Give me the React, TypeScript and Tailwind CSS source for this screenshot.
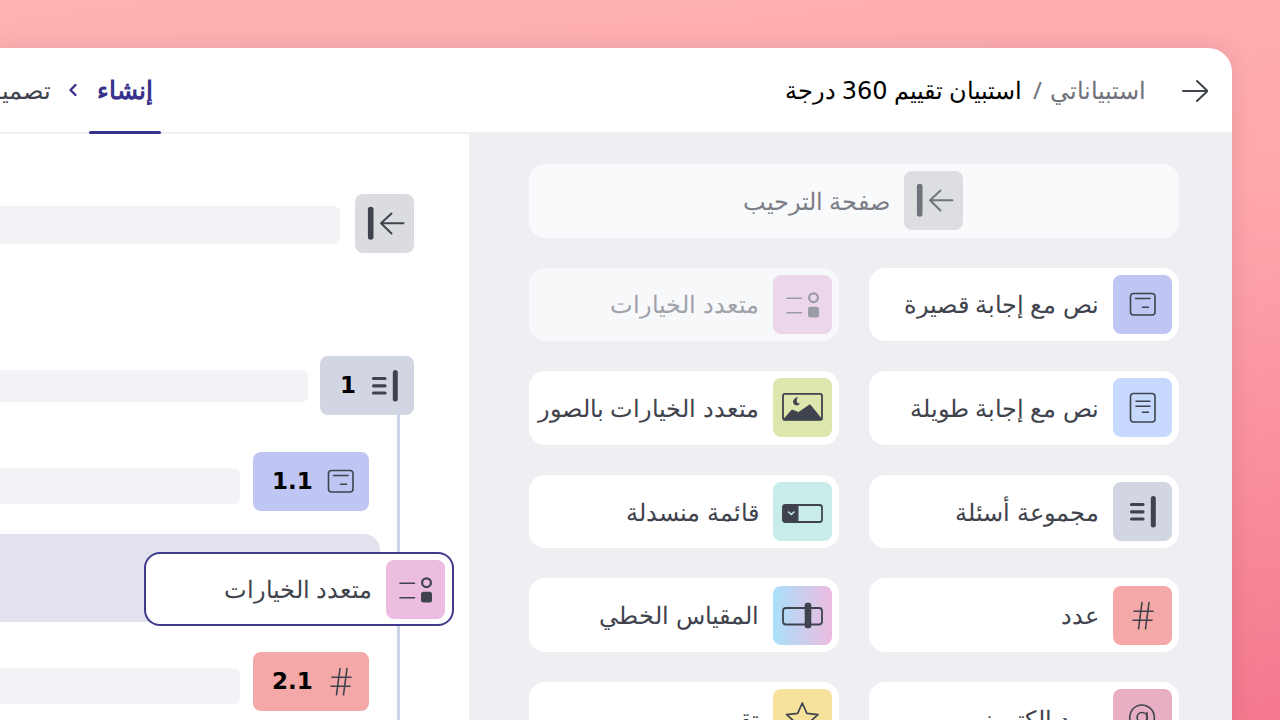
import React from "react";

const Svg = ({ children }: { children: React.ReactNode }) => (
  <svg viewBox="0 0 59 59" className="w-[59px] h-[59px] shrink-0" fill="none" stroke="currentColor" strokeLinecap="round" strokeLinejoin="round">
    {children}
  </svg>
);

const Short = () => (
  <Svg>
    <rect x="17.5" y="18.5" width="24.5" height="21.5" rx="3" strokeWidth="1.6" />
    <path d="M22.5 23.5H37M29.5 32.2H35.5" strokeWidth="1.6" />
  </Svg>
);
const Long = () => (
  <Svg>
    <rect x="17.5" y="15.5" width="24.5" height="28.5" rx="3" strokeWidth="1.6" />
    <path d="M23 23.3H37M23 28.3H37M29.5 34.3H35.5" strokeWidth="1.6" />
  </Svg>
);
const Group = () => (
  <Svg>
    <path d="M40.3 16.5V43" strokeWidth="5" />
    <path d="M18.5 22.5H30M18.5 29.8H30M18.5 37H30" strokeWidth="3.2" />
  </Svg>
);
const Hash = () => (
  <Svg>
    <path d="M21 25.3H40M20 34.3H39M29 16.5L25.5 42.8M36 16.5L32.5 42.8" strokeWidth="1.6" />
  </Svg>
);
const Multi = () => (
  <Svg>
    <path d="M14 23.3H28.5M14 37.7H28.5" strokeWidth="1.6" />
    <circle cx="40.5" cy="22.7" r="4.4" strokeWidth="2.2" />
    <rect x="35" y="31.7" width="11" height="10.8" rx="2.5" fill="currentColor" stroke="none" />
  </Svg>
);
const ImageIcon = () => (
  <Svg>
    <rect x="10" y="15.8" width="39" height="26" rx="2" strokeWidth="1.8" />
    <path d="M10.5 41.5L19 32L25.5 34.5L37 26.7L49 41.5Z" fill="currentColor" strokeWidth="1" />
    <path d="M25 19C20 20 18.5 25 22 27C24 28 26 27.5 27 25.5C24 26 22.5 23 25 19Z" fill="currentColor" stroke="none" />
  </Svg>
);
const Dropdown = () => (
  <Svg>
    <rect x="10" y="23" width="39" height="17" rx="2.5" strokeWidth="1.8" />
    <path d="M12 22.4H25.5V40.4H12C10.5 40.4 9.4 39.4 9.4 38V24.8C9.4 23.4 10.5 22.4 12 22.4Z" fill="currentColor" stroke="none" />
    <path d="M15.5 30L18.3 32.5L21 30" stroke="#c7ece9" strokeWidth="1.6" />
  </Svg>
);
const Slider = () => (
  <Svg>
    <rect x="10" y="22" width="39" height="16.5" rx="3" strokeWidth="1.8" />
    <rect x="31.7" y="16.7" width="6.6" height="25.5" rx="2.5" fill="currentColor" stroke="none" />
  </Svg>
);
const Star = () => (
  <Svg>
    <path d="M29.3 14L33.9 24.4L45 25.6L36.7 33L39.1 44L29.3 38.4L19.5 44L21.9 33L13.6 25.6L24.7 24.4Z" strokeWidth="1.7" />
  </Svg>
);
const At = () => (
  <Svg>
    <g transform="translate(14.3 13.6) scale(1.23)" strokeWidth="1.3">
      <circle cx="12" cy="12" r="4" />
      <path d="M16 8v5a3 3 0 0 0 6 0v-1a10 10 0 1 0-4 8" />
    </g>
  </Svg>
);
const Welcome = () => (
  <Svg>
    <path d="M15.7 15.5V43" strokeWidth="5.6" />
    <path d="M48.5 29.3H26M36.5 19.5L26 29.3L36.5 39.5" strokeWidth="2" />
  </Svg>
);

const Tile = ({ className, children }: { className: string; children: React.ReactNode }) => (
  <div className={`w-[59px] h-[59px] rounded-[8px] shrink-0 text-[#3f434d] ${className}`}>{children}</div>
);

const Card = ({ tile, icon, label }: { tile: string; icon: React.ReactNode; label: string }) => (
  <div className="h-[73.6px] rounded-[16px] bg-white p-[7.3px] flex items-center gap-[14px]">
    <Tile className={tile}>{icon}</Tile>
    <span className="text-[24px] font-medium leading-none text-[#3f434d] whitespace-nowrap">{label}</span>
  </div>
);

const NumTile = ({ className, n, icon }: { className: string; n: string; icon: React.ReactNode }) => (
  <div dir="ltr" className={`h-[59px] rounded-[8px] flex items-center justify-between shrink-0 text-[#3f434d] ${className}`}>
    <span className="text-[23px] font-bold text-black leading-none font-['DejaVu_Sans'] -mr-[2px]">{n}</span>
    {icon}
  </div>
);

export default function App() {
  return (
    <div className="w-[1280px] h-[720px] overflow-hidden pt-12 bg-[linear-gradient(172deg,#ffb3b3_0%,#ffa8ac_40%,#f4788e_100%)] font-['Noto_Sans',sans-serif]">
      <div dir="rtl" className="w-[1232px] h-[672px] bg-white rounded-tr-[24px] flex flex-col overflow-hidden shadow-[0_0_24px_rgba(0,0,0,0.1)]">
        <header className="h-[86px] shrink-0 flex items-stretch justify-between border-b-2 border-[#eff0f3] pr-[24px]">
          <div className="flex items-center">
            <svg viewBox="0 0 26 24" className="w-[26px] h-[24px] mt-[1px] text-[#3f434d]" fill="none" stroke="currentColor" strokeWidth="2" strokeLinecap="round" strokeLinejoin="round">
              <path d="M1 12H25M15 2L25.5 12L15 22" />
            </svg>
            <span className="mr-[36px] text-[24px] text-[#6f727a] whitespace-nowrap">استبياناتي</span>
            <span className="mr-[8px] ml-[11px] text-[24px] text-[#6f727a]">/</span>
            <span className="text-[24px] text-black font-medium whitespace-nowrap">
              استبيان تقييم <span className="font-['DejaVu_Sans']">360</span> درجة
            </span>
          </div>
          <nav className="flex items-center -ml-[24px]">
            <div className="relative h-full flex items-center px-[8px] text-[25px] font-bold text-[#38328c] whitespace-nowrap">
              إنشاء
              <span className="absolute right-0 left-0 -bottom-[2px] h-[3px] rounded-full bg-[#38328c]" />
            </div>
            <svg viewBox="0 0 12 16" className="w-[12px] h-[16px] mr-[10px] ml-[16px] text-[#38328c]" fill="none" stroke="currentColor" strokeWidth="2.4" strokeLinecap="round" strokeLinejoin="round">
              <path d="M8.5 3L3.5 8L8.5 13" />
            </svg>
            <span className="text-[24px] text-[#3f434d] whitespace-nowrap pl-[10px]">تصميم</span>
          </nav>
        </header>
        <div className="flex-1 flex min-h-0">
          <section className="w-[763px] shrink-0 bg-[#eeeff3] pt-[30px] pr-[53px] pl-[60px] flex flex-col gap-[30px]">
            <div className="h-[73.6px] shrink-0 rounded-[16px] bg-[#f9fafc] p-[7.3px] flex items-center gap-[14px] pr-[216px]">
              <Tile className="bg-[#dddee2] !text-[#6f737c]"><Welcome /></Tile>
              <span className="text-[24px] font-medium leading-none text-[#7b7e86] whitespace-nowrap">صفحة الترحيب</span>
            </div>
            <div className="grid grid-cols-2 gap-x-[30px] gap-y-[30px]">
              <Card tile="bg-[#bfc6f3]" icon={<Short />} label="نص مع إجابة قصيرة" />
              <div className="h-[73.6px] rounded-[16px] bg-[#f7f8fa] p-[7.3px] flex items-center gap-[14px]">
                <Tile className="bg-[#ecd7ea] !text-[#9a9ca5]"><Multi /></Tile>
                <span className="text-[24px] font-medium leading-none text-[#a0a2a9]">متعدد الخيارات</span>
              </div>
              <Card tile="bg-[#c7d9fe]" icon={<Long />} label="نص مع إجابة طويلة" />
              <Card tile="bg-[#dde6ad]" icon={<ImageIcon />} label="متعدد الخيارات بالصور" />
              <Card tile="bg-[#d2d6e3]" icon={<Group />} label="مجموعة أسئلة" />
              <Card tile="bg-[#c7ece9]" icon={<Dropdown />} label="قائمة منسدلة" />
              <Card tile="bg-[#f4a8a8]" icon={<Hash />} label="عدد" />
              <Card tile="bg-[linear-gradient(90deg,#a9e0fb,#ecbbdf)]" icon={<Slider />} label="المقياس الخطي" />
              <Card tile="bg-[#e8aec3]" icon={<At />} label="بريد الكتروني" />
              <Card tile="bg-[#f6e29b]" icon={<Star />} label="تقييم" />
            </div>
          </section>
          <section className="relative flex-1 pt-[60px] pr-[55px] flex flex-col bg-white">
            <div className="absolute right-[69px] top-[274px] bottom-0 w-[3px] bg-[#cdd5e6] z-10" />
            <div className="flex gap-[15px]">
              <Tile className="bg-[#dbdce0]"><Welcome /></Tile>
              <div className="flex-1 h-[38px] mt-[12px] -ml-[20px] rounded-[6px] bg-[#f2f3f7]" />
            </div>
            <div className="flex gap-[12px] mt-[103px]">
              <NumTile className="bg-[#d2d6e3] w-[94px] pl-[20px]" n="1" icon={<Group />} />
              <div className="flex-1 h-[32px] mt-[14px] -ml-[20px] rounded-[6px] bg-[#f2f3f7]" />
            </div>
            <div className="flex gap-[13px] mt-[37px] mr-[45px]">
              <NumTile className="bg-[#bfc6f3] w-[116px] pl-[19px]" n="1.1" icon={<Short />} />
              <div className="flex-1 h-[36px] mt-[16px] -ml-[20px] rounded-[6px] bg-[#f2f3f7]" />
            </div>
            <div className="h-[88px] mt-[23px] mr-[34px] -ml-[20px] rounded-[16px] bg-[#e2e1ee]" />
            <div className="flex gap-[13px] mt-[30px] mr-[45px]">
              <NumTile className="bg-[#f4a8a8] w-[116px] pl-[19px]" n="2.1" icon={<Hash />} />
              <div className="flex-1 h-[36px] mt-[16px] -ml-[20px] rounded-[6px] bg-[#f2f3f7]" />
            </div>
            <div className="absolute z-20 right-[15px] top-[418px] w-[310px] h-[74px] rounded-[16px] border-2 border-[#3f3a8c] bg-white pr-[7px] flex items-center gap-[14px]">
              <Tile className="bg-[#ecbde0]"><Multi /></Tile>
              <span className="text-[24px] font-medium leading-none text-[#3f434d]">متعدد الخيارات</span>
            </div>
          </section>
        </div>
      </div>
    </div>
  );
}
